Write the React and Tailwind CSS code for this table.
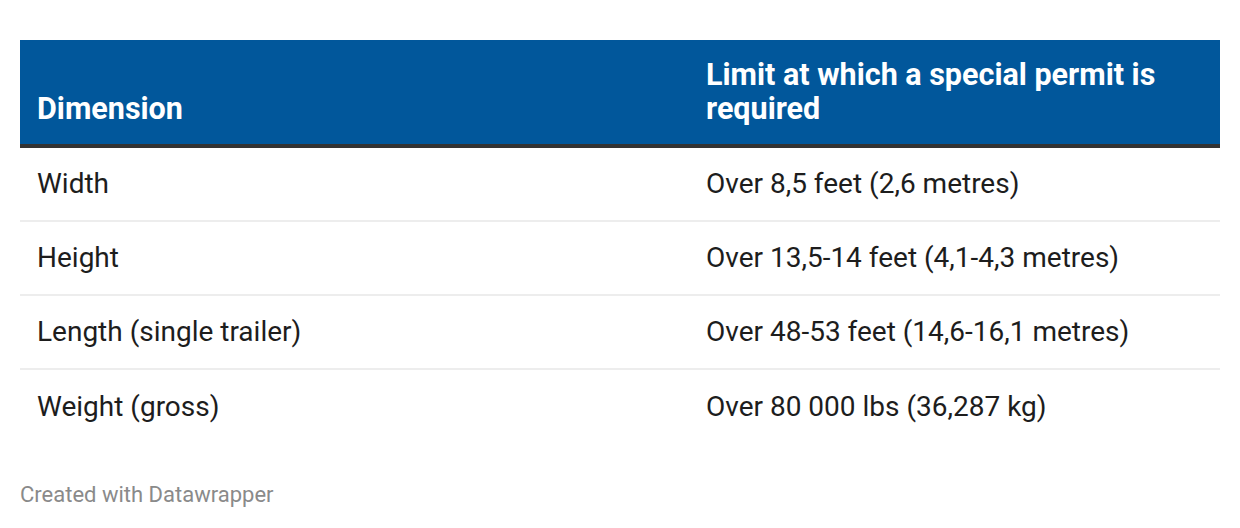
export default function App() {
  const rows = [
    ["Width", "Over 8,5 feet (2,6 metres)"],
    ["Height", "Over 13,5-14 feet (4,1-4,3 metres)"],
    ["Length (single trailer)", "Over 48-53 feet (14,6-16,1 metres)"],
    ["Weight (gross)", "Over 80 000 lbs (36,287 kg)"],
  ];
  return (
    <div className="w-[1240px] h-[528px] bg-white px-5 pt-10 font-['Roboto',sans-serif]">
      <div className="flex flex-col">
        <div className="flex bg-[#01579b] border-b-4 border-[#333333] h-[108px]">
          <div className="w-[669px] pl-[17px] flex items-end pb-[18px]">
            <span className="text-white font-bold text-[30.5px] leading-[34px]">Dimension</span>
          </div>
          <div className="flex-1 pl-[17px] pr-4 flex items-end pb-[18px]">
            <span className="text-white font-bold text-[30.5px] leading-[34px]">
              Limit at which a special permit is
              <br />
              required
            </span>
          </div>
        </div>
        {rows.map((r, i) => (
          <div
            key={i}
            className={`flex h-[74px] items-center ${i < rows.length - 1 ? "border-b-2 border-[#ededed]" : ""}`}
          >
            <div className="w-[669px] pl-[17px] text-[28px] text-[#1d1d1d]">{r[0]}</div>
            <div className="flex-1 pl-[17px] text-[28px] text-[#1d1d1d]">{r[1]}</div>
          </div>
        ))}
      </div>
      <div className="mt-[34px] text-[22px] text-[#8a8a8a]">Created with Datawrapper</div>
    </div>
  );
}
